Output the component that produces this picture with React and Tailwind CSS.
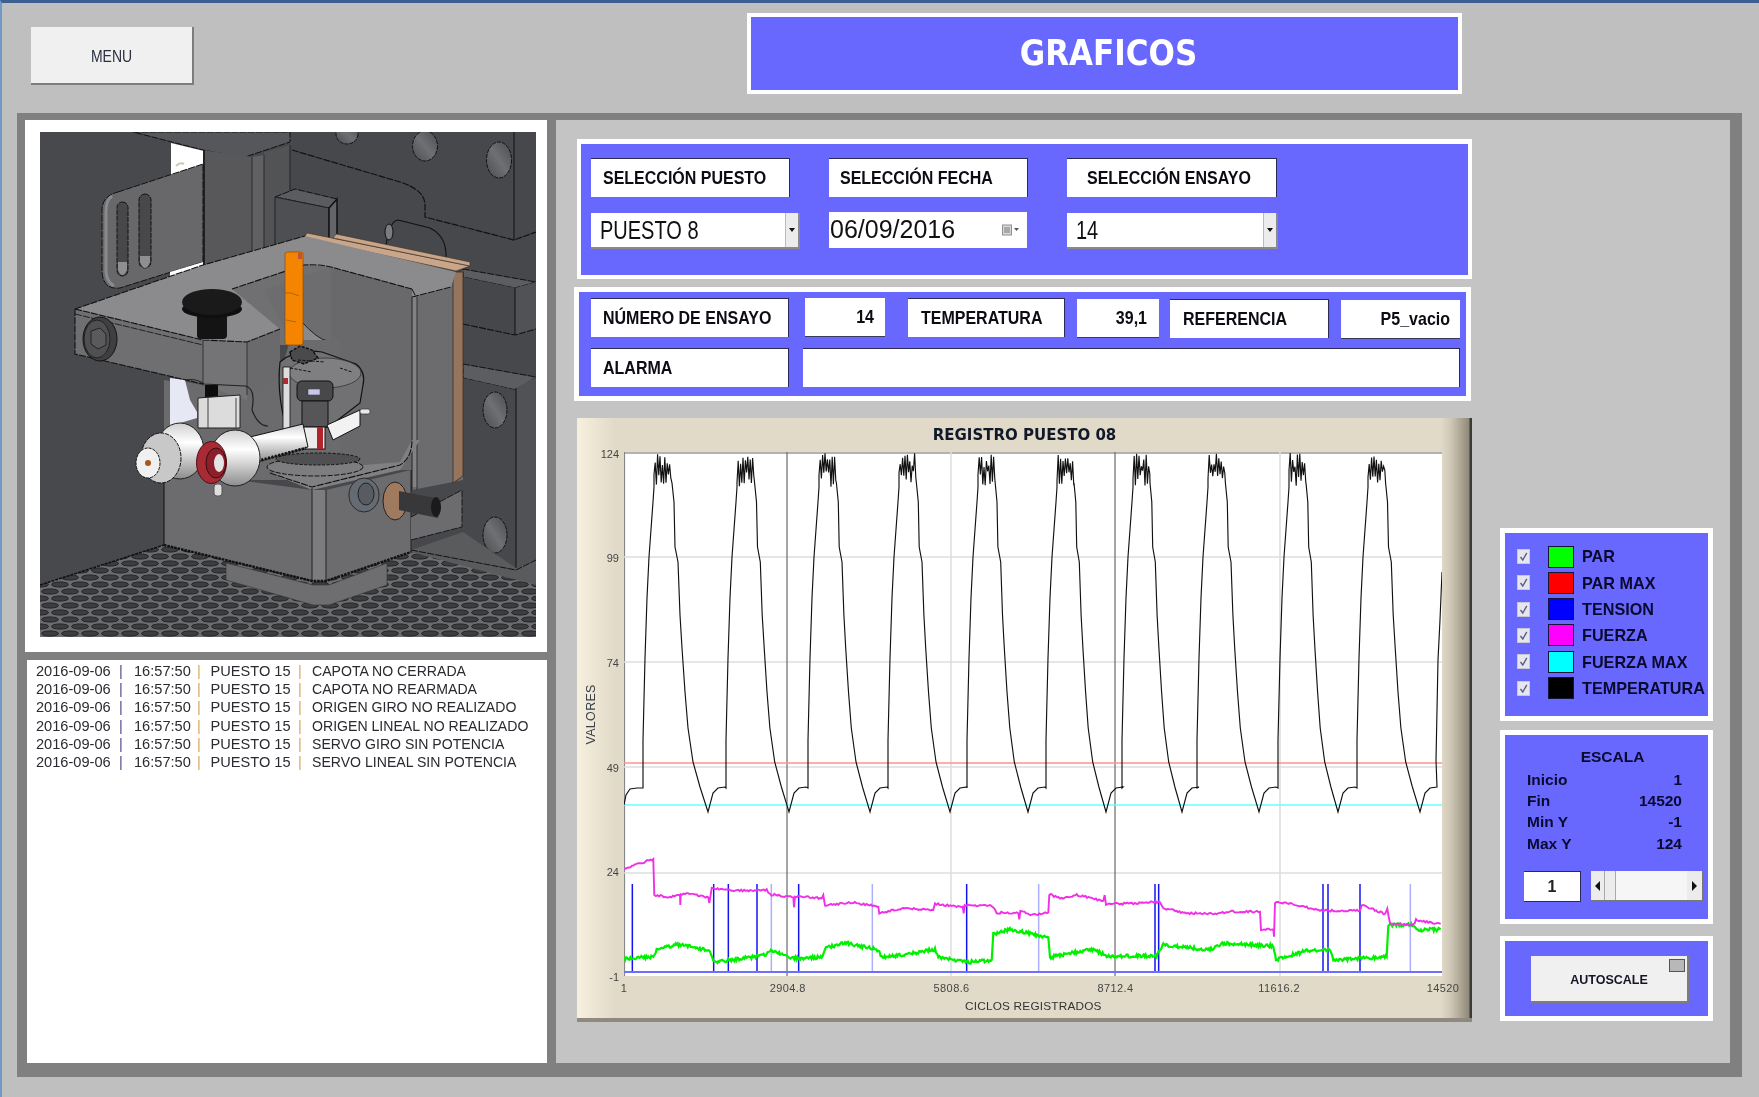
import React from "react";

const z5 = ([x, y]) => [570 + x / 3, 760 + y / 3];
const z6 = ([x, y]) => [1060 + x / 3, 760 + y / 3];

function hash(n) {
  const s = Math.sin(n * 127.1 + 11.7) * 43758.5453;
  return s - Math.floor(s);
}

function noisy(points, amp, step, seed) {
  let d = "";
  let n = 0;
  for (let i = 0; i < points.length - 1; i++) {
    const [x0, y0] = points[i];
    const [x1, y1] = points[i + 1];
    const len = Math.max(1, Math.round(Math.abs(x1 - x0) / step));
    for (let k = 0; k < len; k++) {
      const t = k / len;
      const jitter = (hash(n + seed) - 0.5) * 2 * amp;
      const x = x0 + (x1 - x0) * t;
      const y = y0 + (y1 - y0) * t + (Math.abs(x1 - x0) < 2 ? 0 : jitter);
      d += (n === 0 ? "M" : "L") + x.toFixed(1) + " " + y.toFixed(1);
      n++;
    }
  }
  const last = points[points.length - 1];
  return d + "L" + last[0] + " " + last[1];
}

const pink = [
  ...[[163, 325], [250, 297], [253, 405], [300, 412], [330, 405], [331, 435], [332, 405], [345, 400], [415, 412], [418, 428], [425, 385], [500, 392], [590, 390], [600, 403], [670, 412], [672, 442], [675, 408], [755, 415], [760, 405], [765, 435], [850, 428], [925, 440], [928, 460], [1000, 445], [1090, 450], [1095, 432], [1178, 440], [1181, 460], [1184, 435], [1265, 438], [1280, 458], [1345, 460], [1348, 478], [1351, 450], [1385, 465], [1435, 458], [1438, 403]].map(z5),
  ...[[0, 415], [50, 405], [130, 422], [134, 405], [138, 432], [220, 430], [300, 425], [310, 445], [380, 460], [470, 460], [510, 455], [600, 455], [603, 508], [640, 508], [642, 530], [645, 428], [700, 432], [780, 452], [900, 452], [905, 435], [975, 462], [982, 445], [990, 490], [1060, 495], [1068, 480], [1142, 492]].map(z6),
];

const green = [
  ...[[163, 595], [250, 590], [260, 570], [320, 553], [420, 572], [430, 600], [445, 605], [520, 595], [590, 585], [600, 570], [670, 595], [755, 592], [765, 565], [825, 548], [925, 570], [935, 593], [1000, 585], [1095, 568], [1105, 590], [1190, 607], [1265, 600], [1270, 522], [1320, 508], [1435, 532], [1440, 593]].map(z5),
  ...[[0, 585], [100, 568], [140, 588], [290, 588], [310, 555], [450, 570], [490, 550], [640, 558], [648, 600], [740, 572], [810, 570], [820, 600], [980, 590], [985, 495], [1060, 495], [1068, 510], [1142, 508]].map(z6),
];

const blueDark = [187, 431, 475, 561, 686, 1190].map((x) => 570 + x / 3).concat([285, 296, 789, 804, 900].map((x) => 1060 + x / 3));
const blueLight = [604, 907, 1406].map((x) => 570 + x / 3).concat([1060 + 1051 / 3]);

function temperature() {
  const peaks = [663, 746, 828, 908, 987, 1066, 1142, 1217, 1298, 1377];
  const troughs = [708, 789, 870, 950, 1028, 1106, 1182, 1259, 1338, 1420];
  const rise = [[-20, 788], [-20, 740], [-18, 658], [-16, 598], [-14, 557], [-10, 502], [-9, 487]];
  const fall = [[9, 483], [11, 502], [12, 547], [15, 562], [17, 615], [19, 648], [22, 692], [25, 728], [30, 762], [37, 787], [45, 812]];
  let d = "M624 805L626 795L630 789L637 788";
  peaks.forEach((p, i) => {
    const t = troughs[i];
    rise.forEach(([o, y]) => (d += `L${p + o} ${y}`));
    for (let x = p - 9, n = 0; x <= p + 9; x += 1.2, n++) {
      const up = 453 + hash(n + i * 31) * 14;
      const dn = 470 + hash(n + i * 17 + 5) * 17;
      d += `L${x.toFixed(1)} ${n % 2 ? up.toFixed(1) : dn.toFixed(1)}`;
    }
    const k = (t - p) / 45;
    fall.forEach(([o, y]) => (d += `L${(p + o * k).toFixed(1)} ${y}`));
    d += `L${t + 5} 793L${t + 10} 788L${t + 17} 787`;
  });
  d += "L1436 760L1438 660L1440 620L1442 572";
  return d;
}

const LOG = [
  "CAPOTA NO CERRADA",
  "CAPOTA NO REARMADA",
  "ORIGEN GIRO NO REALIZADO",
  "ORIGEN LINEAL NO REALIZADO",
  "SERVO GIRO SIN POTENCIA",
  "SERVO LINEAL SIN POTENCIA",
];

const LEGEND = [
  ["PAR", "bg-[#00ff00]"],
  ["PAR MAX", "bg-[#ff0000]"],
  ["TENSION", "bg-[#0000ff]"],
  ["FUERZA", "bg-[#ff00ff]"],
  ["FUERZA MAX", "bg-[#00ffff]"],
  ["TEMPERATURA", "bg-[#000000]"],
];

function MachinePicture() {
  const dash = "7 1.2";
  return (
    <svg viewBox="40 132 496 505" className="block w-[496px] h-[505px]">
      <defs>
        <pattern id="mesh" x="0" y="0" width="20" height="14" patternUnits="userSpaceOnUse">
          <rect width="20" height="14" fill="#6c6d70" />
          <ellipse cx="10" cy="3.5" rx="8.5" ry="2.6" fill="#3c3d40" stroke="#141414" strokeWidth="0.8" />
          <ellipse cx="0" cy="10.5" rx="8.5" ry="2.6" fill="#3c3d40" stroke="#141414" strokeWidth="0.8" />
          <ellipse cx="20" cy="10.5" rx="8.5" ry="2.6" fill="#3c3d40" stroke="#141414" strokeWidth="0.8" />
        </pattern>
        <linearGradient id="hole" x1="0" y1="1" x2="1" y2="0">
          <stop offset="0" stopColor="#4a4c50" />
          <stop offset="0.5" stopColor="#6e7074" />
          <stop offset="1" stopColor="#4a4c50" />
        </linearGradient>
        <linearGradient id="cyl" x1="0" y1="0" x2="0" y2="1">
          <stop offset="0" stopColor="#d0d0d0" />
          <stop offset="0.35" stopColor="#ffffff" />
          <stop offset="1" stopColor="#8c8c8c" />
        </linearGradient>
      </defs>
      <rect x="40" y="132" width="496" height="505" fill="#47494c" />

      {/* back plate */}
      <polygon points="203,132 536,132 536,600 203,600" fill="#46484b" />
      <polygon points="133,132 290,132 290,142 245,157 235,156 203,150" fill="#56575a" stroke="#111" strokeWidth="1" strokeDasharray={dash} />
      <polygon points="171,143 204,151 204,164 171,176" fill="#ffffff" />
      <polygon points="203,150 252,157 252,300 203,300" fill="#58585a" />
      <polygon points="252,157 264,155 264,300 252,300" fill="#606062" />
      <polygon points="264,152 290,145 290,260 264,270" fill="#525355" />
      <line x1="204" y1="150" x2="204" y2="265" stroke="#111" strokeWidth="1.5" />
      <line x1="252" y1="157" x2="252" y2="285" stroke="#2a2a2a" />
      <line x1="264" y1="155" x2="264" y2="280" stroke="#2a2a2a" />
      <line x1="290" y1="145" x2="290" y2="200" stroke="#222" />
      <path d="M292 150L400 182Q425 190 425 205L425 217L514 240L536 232" fill="none" stroke="#111" strokeWidth="1.2" strokeDasharray={dash} />
      <line x1="514" y1="132" x2="514" y2="240" stroke="#111" />
      <ellipse cx="347" cy="134" rx="11" ry="10" fill="url(#hole)" stroke="#111" strokeDasharray="4 1" />
      <ellipse cx="425" cy="146" rx="12.5" ry="15" fill="url(#hole)" stroke="#111" strokeDasharray="4 1" />
      <ellipse cx="499" cy="160" rx="12.5" ry="18" fill="url(#hole)" stroke="#111" strokeDasharray="4 1" />
      <path d="M385 255Q388 221 398 220L430 228Q446 236 446 255L446 265L385 255Z" fill="#46484b" stroke="#111" strokeWidth="1.1" />
      <ellipse cx="389" cy="232" rx="4" ry="8" fill="#7a7c80" stroke="#111" />

      {/* step block */}
      <polygon points="275,197 295,189 337,199 329,208" fill="#5a5c5f" stroke="#111" strokeDasharray={dash} />
      <polygon points="275,197 329,208 329,250 275,250" fill="#4d4f52" stroke="#222" />
      <polygon points="329,208 337,199 337,245 329,250" fill="#63656a" stroke="#111" strokeWidth="1.5" />

      {/* slotted plate */}
      <path d="M118 192L203 164L203 262L120 288Q103 290 102 272L102 210Q102 196 118 192Z" fill="#68686a" stroke="#111" strokeDasharray={dash} />
      <path d="M112 196Q106 200 106 212L106 272Q107 282 114 286" fill="none" stroke="#8a8a8c" strokeWidth="3" />
      <rect x="117" y="202" width="11" height="74" rx="5.5" fill="#48484a" stroke="#111" strokeDasharray="5 1" />
      <path d="M118 262L127 262L127 270Q122 280 118 270Z" fill="#8f8f91" />
      <rect x="139" y="194" width="12" height="74" rx="6" fill="#48484a" stroke="#111" strokeDasharray="5 1" />
      <path d="M140 256L150 256L150 262Q145 274 140 262Z" fill="#8f8f91" />
      <path d="M176 166Q180 162 184 164" fill="none" stroke="#c8c8b0" strokeWidth="2" />
      <polygon points="170,272 203,262 203,267 170,277" fill="#ffffff" />

      {/* bracket inner walls */}
      <polygon points="232,289 304,265 331,267 331,345 270,345" fill="#707072" />
      <polygon points="331,267 412,289 412,470 331,470" fill="#69696b" />
      <polygon points="264,290 331,267 331,345 290,340" fill="#6d6d6f" />
      <path d="M300 320Q318 340 328 341L300 342Z" fill="#8a8a8c" stroke="#222" />
      <polygon points="412,289 451,282 463,270 463,480 412,490" fill="#6c6c6e" />
      <rect x="412" y="297" width="5" height="190" fill="#828284" />
      <line x1="412" y1="297" x2="412" y2="490" stroke="#222" />
      <line x1="417" y1="297" x2="417" y2="490" stroke="#333" />

      {/* right plates */}
      <polygon points="463,269 536,282 515,288 463,277" fill="#5b5d60" stroke="#111" strokeDasharray={dash} />
      <polygon points="463,277 515,288 515,335 463,324" fill="#45474a" />
      <polygon points="515,288 536,282 536,329 515,335" fill="#505255" />
      <line x1="515" y1="288" x2="515" y2="335" stroke="#111" />
      <path d="M463 324L515 335L536 329" fill="none" stroke="#111" strokeWidth="1.1" strokeDasharray={dash} />
      <polygon points="463,364 536,377 516,390 463,378" fill="#5b5d60" stroke="#111" strokeDasharray={dash} />
      <polygon points="463,378 516,390 516,568 411,550 463,530" fill="#46484b" />
      <polygon points="516,388 536,377 536,560 516,568" fill="#505255" />
      <line x1="516" y1="388" x2="516" y2="568" stroke="#111" />
      <ellipse cx="495" cy="410" rx="12" ry="18" fill="url(#hole)" stroke="#111" strokeDasharray="4 1" />
      <ellipse cx="495" cy="535" rx="12" ry="18" fill="url(#hole)" stroke="#111" strokeDasharray="4 1" />
      <polygon points="411,550 463,532 516,568 536,560 536,590 411,560" fill="#5a5b5d" />
      <path d="M411 550L516 570L536 560" fill="none" stroke="#111" strokeDasharray={dash} />

      {/* brown strip */}
      <polygon points="453,272 463,272 463,476 453,483" fill="#96755e" stroke="#3a2f27" strokeWidth="0.8" />
      <polygon points="307,233 470,266 456,271 304,238" fill="#c9a689" stroke="#3a2f27" strokeWidth="0.6" />
      <polygon points="336,234 470,262 470,266 333,238" fill="#c9a689" stroke="#3a2f27" strokeWidth="0.6" />

      {/* lower wall behind regulator */}
      <polygon points="170,378 247,395 280,375 290,340 340,340 340,480 164,480" fill="#6b6b6d" />
      <polygon points="40,350 120,363 164,380 164,545 40,585" fill="#47494c" />
      <polygon points="164,380 247,395 247,480 164,480" fill="#6b6b6d" />
      <polygon points="170,378 185,380 190,400 197,412 197,418 170,426" fill="#e6e8f4" />

      {/* bracket faces */}
      <polygon points="75,309 203,265 305,236 456,272 451,287 412,297 412,289 331,267 304,265 232,289 280,329 247,342 203,340" fill="#8b8b8d" />
      <path d="M75 309L203 265L305 236" fill="none" stroke="#111" strokeWidth="1.1" strokeDasharray={dash} />
      <path d="M412 289L331 267Q318 264 304 265L232 289" fill="none" stroke="#111" strokeWidth="1.1" strokeDasharray={dash} />
      <path d="M412 297L451 287M412 289L416 297" fill="none" stroke="#111" strokeDasharray={dash} />
      <polygon points="75,309 203,340 203,384 75,354" fill="#6f6f71" />
      <path d="M75 314L203 345" stroke="#222" fill="none" strokeDasharray={dash} />
      <polygon points="203,340 247,342 247,400 203,385" fill="#747476" />
      <polygon points="247,342 280,329 280,375 247,400" fill="#6a6a6c" />
      <path d="M75 309L203 340L247 342L280 329" fill="none" stroke="#111" strokeWidth="1.1" strokeDasharray={dash} />
      <path d="M75 309L75 354L203 384" fill="none" stroke="#111" strokeWidth="1.1" strokeDasharray={dash} />
      <line x1="203" y1="340" x2="203" y2="385" stroke="#333" />
      <line x1="247" y1="342" x2="247" y2="395" stroke="#333" />
      <path d="M186 380Q196 378 204 384L245 386Q256 388 252 410Q258 426 268 426" fill="none" stroke="#222" strokeWidth="1.2" />

      {/* arm bolt */}
      <ellipse cx="100" cy="339" rx="17" ry="22" fill="#3f3f41" stroke="#111" />
      <ellipse cx="97" cy="339" rx="13" ry="19" fill="#505052" stroke="#222" />
      <polygon points="91,331 100,328 106,334 106,345 98,349 91,344" fill="#5a5a5c" stroke="#222" />

      {/* knob */}
      <rect x="197" y="312" width="30" height="27" rx="4" fill="#141414" />
      <ellipse cx="212" cy="309" rx="30" ry="9" fill="#0f0f0f" />
      <ellipse cx="212" cy="302" rx="30" ry="13" fill="#1a1a1a" />

      {/* floor */}
      <polygon points="40,585 164,545 312,580 411,552 536,585 536,637 40,637" fill="url(#mesh)" />
      <path d="M40 585L164 545" fill="none" stroke="#111" strokeWidth="1.6" strokeDasharray="3 1" />

      {/* base */}
      <polygon points="226,563 313,585 329,585 387,563 387,585 329,605 313,605 226,580" fill="#6e6e70" stroke="#333" strokeWidth="0.6" />
      <polygon points="164,470 312,490 312,580 164,545" fill="#6c6c6e" />
      <polygon points="312,490 326,490 326,580 312,580" fill="#7c7c7e" />
      <polygon points="326,490 411,470 411,552 326,580" fill="#6c6c6e" />
      <polygon points="270,473 400,462 412,440 420,440 400,470 312,490" fill="#808082" />
      <path d="M270 473L312 487L400 465Q412 458 412 440" fill="none" stroke="#111" strokeWidth="1.1" strokeDasharray={dash} />
      <line x1="164" y1="470" x2="164" y2="545" stroke="#111" />
      <line x1="312" y1="488" x2="312" y2="582" stroke="#222" />
      <line x1="326" y1="490" x2="326" y2="582" stroke="#222" />
      <line x1="411" y1="470" x2="411" y2="552" stroke="#222" />
      <path d="M164 545L312 581L326 581L411 552" fill="none" stroke="#111" strokeWidth="2.4" strokeDasharray="2.5 1" />
      <polygon points="411,517 462,490 462,527 411,540" fill="#6c6c6e" />
      <path d="M411 517L462 490M411 540L462 527L462 490" fill="none" stroke="#111" strokeWidth="0.9" strokeDasharray={dash} />

      {/* washer and thread */}
      <ellipse cx="364" cy="495" rx="15" ry="17" fill="#656b72" stroke="#2a2a2a" />
      <ellipse cx="366" cy="494" rx="8" ry="11" fill="#585c62" stroke="#222" />
      <ellipse cx="395" cy="501" rx="12" ry="19" fill="#a07a5f" stroke="#222" />
      <polygon points="399,491 435,498 441,506 438,518 399,510" fill="#38383a" />
      <ellipse cx="436" cy="507" rx="5" ry="10" fill="#1a1a1a" />

      {/* regulator upper */}
      <path d="M280 362Q296 348 322 352L356 364Q366 372 363 385L360 403L330 426L290 438Q276 400 280 362Z" fill="#717173" stroke="#111" strokeWidth="1.2" />
      <ellipse cx="325" cy="373" rx="36" ry="15" fill="#7f7f81" stroke="#333" strokeWidth="0.8" />
      <path d="M290 352L300 346L312 350L318 358L304 364L292 360Z" fill="#4a4a4c" stroke="#0c0c0c" strokeWidth="1.4" strokeDasharray="3 1.5" />
      <path d="M298 360L325 362M290 368L312 372M340 368L352 372" stroke="#111" strokeWidth="1" strokeDasharray="3 1.5" fill="none" />
      <rect x="283" y="367" width="7" height="75" fill="#ddd" stroke="#111" strokeWidth="0.8" />
      <rect x="283" y="378" width="5" height="6" fill="#b02a30" />
      <rect x="297" y="381" width="36" height="20" rx="5" fill="#48484a" stroke="#111" />
      <rect x="308" y="389" width="12" height="6" fill="#c9c6ee" stroke="#444" strokeWidth="0.6" />
      <rect x="302" y="401" width="26" height="26" fill="#565658" stroke="#111" />
      <polygon points="327,425 360,410 360,426 333,440" fill="#f2f2f2" stroke="#111" />
      <rect x="360" y="409" width="10" height="5" rx="2" fill="#e8e8e8" stroke="#333" strokeWidth="0.7" />
      <rect x="303" y="427" width="22" height="22" fill="#ececec" stroke="#111" />
      <rect x="317" y="427" width="6" height="22" fill="#b3232b" />
      <ellipse cx="315" cy="467" rx="48" ry="9" fill="#7d7d7f" stroke="#111" strokeDasharray="5 1.5" />
      <ellipse cx="318" cy="459" rx="42" ry="6" fill="#505052" stroke="#111" strokeDasharray="3 1.5" />

      {/* upper white block */}
      <rect x="205" y="385" width="13" height="12" fill="#0c0c0c" />
      <polygon points="198,398 240,395 240,428 198,428" fill="#dcdcdc" stroke="#222" />
      <line x1="208" y1="398" x2="208" y2="428" stroke="#444" />
      <line x1="236" y1="398" x2="236" y2="428" stroke="#444" />

      {/* body cylinder */}
      <polygon points="250,437 303,424 308,447 257,462" fill="url(#cyl)" stroke="#111" />
      <path d="M258 461L306 448" stroke="#111" strokeWidth="3" strokeDasharray="2 1.5" fill="none" />
      <ellipse cx="235" cy="458" rx="25" ry="28" fill="url(#cyl)" stroke="#222" />
      <rect x="214" y="484" width="8" height="12" rx="3" fill="#dedede" stroke="#555" />
      <ellipse cx="180" cy="451" rx="24" ry="28" fill="url(#cyl)" stroke="#222" />
      <ellipse cx="161" cy="458" rx="20" ry="25" fill="#c8c8c8" stroke="#111" strokeDasharray="4 1" />
      <ellipse cx="148" cy="463" rx="12" ry="15" fill="#f0f0f0" stroke="#111" strokeDasharray="3 1" />
      <circle cx="148" cy="463" r="3" fill="#a8561c" />
      <ellipse cx="211.5" cy="462.5" rx="15" ry="21" fill="#a72a35" stroke="#4a0f14" />
      <ellipse cx="216" cy="463" rx="10" ry="15" fill="#8c1f2a" stroke="#3a0c10" />
      <ellipse cx="219" cy="463" rx="5" ry="9" fill="#e4e4e4" />

      {/* orange handle */}
      <rect x="285" y="252" width="18" height="93" rx="2.5" fill="#f58400" stroke="#8a4a00" strokeWidth="0.7" />
      <path d="M285 293L291 293L299 296M286 320L296 322" stroke="#a65a00" strokeWidth="0.8" fill="none" />
      <rect x="298" y="253" width="4" height="6" fill="#c05040" />
    </svg>
  );
}

function Chart() {
  const yTicks = ["124", "99", "74", "49", "24", "-1"];
  const xTicks = ["1", "2904.8", "5808.6", "8712.4", "11616.2", "14520"];
  return (
    <div className="mt-[17px] w-[895px] h-[604px] border-b-4 border-[#8f8a7c] bg-[linear-gradient(90deg,#f8f0de_0px,#e2dac8_38px,#e2dac8_864px,#cfc7b5_874px,#8f8979_892px,#3a3a36_893px)] font-['Liberation_Sans',sans-serif]">
      <div className="h-[34px] flex items-center justify-center text-[15px] font-bold text-[#10182a] font-['DejaVu_Sans',sans-serif]">
        <span className="block">REGISTRO PUESTO 08</span>
      </div>
      <div className="flex h-[524px]">
        <div className="w-[28px] flex items-center justify-center">
          <span className="block -rotate-90 whitespace-nowrap text-[12.5px] text-[#3a4048] tracking-[0.3px]">VALORES</span>
        </div>
        <div className="w-[14px] mt-[2px] h-[523px] flex flex-col justify-between items-end">
          {yTicks.map((t) => (
            <div key={t} className="h-0 flex items-center justify-end whitespace-nowrap text-[11px] text-[#454545]">
              {t}
            </div>
          ))}
        </div>
        <div className="w-[5px]" />
        <svg viewBox="624 452 818 524" className="block w-[818px] h-[524px] bg-white">
          <line x1="624" y1="453" x2="1442" y2="453" stroke="#999" strokeWidth="1.5" />
          <line x1="624.5" y1="452" x2="624.5" y2="976" stroke="#888" strokeWidth="1.2" />
          {[557, 662, 767, 873].map((y) => (
            <line key={y} x1="624" y1={y} x2="1442" y2={y} stroke="#dedede" strokeWidth="1.6" />
          ))}
          <line x1="951" y1="452" x2="951" y2="976" stroke="#dcdcdc" strokeWidth="1.5" />
          <line x1="1280" y1="452" x2="1280" y2="976" stroke="#dcdcdc" strokeWidth="1.5" />
          <line x1="787" y1="452" x2="787" y2="976" stroke="#6a6a6a" strokeWidth="1.2" />
          <line x1="1115" y1="452" x2="1115" y2="976" stroke="#6a6a6a" strokeWidth="1.2" />
          <line x1="624" y1="763" x2="1442" y2="763" stroke="#ff9090" strokeWidth="1.5" />
          <line x1="624" y1="805" x2="1442" y2="805" stroke="#66ffff" strokeWidth="1.5" />
          {blueLight.map((x) => (
            <line key={x} x1={x} y1="884" x2={x} y2="972" stroke="#aeaeff" strokeWidth="1.5" />
          ))}
          {blueDark.map((x) => (
            <line key={x} x1={x} y1="884" x2={x} y2="972" stroke="#1414f0" strokeWidth="1.5" />
          ))}
          <line x1="624" y1="972" x2="1442" y2="972" stroke="#6f6fff" strokeWidth="2" />
          <path d={noisy(green, 1.7, 1, 3)} fill="none" stroke="#00f000" strokeWidth="2.2" />
          <path d={noisy(pink, 1, 1.5, 91)} fill="none" stroke="#f030e8" strokeWidth="1.9" />
          <path d={temperature()} fill="none" stroke="#111" strokeWidth="1.15" />
        </svg>
      </div>
      <div className="ml-[47px] w-[819px] mt-[5px] h-[14px] flex justify-between items-center">
        {xTicks.map((t) => (
          <div key={t} className="w-0 flex justify-center whitespace-nowrap text-[11px] text-[#454545] tracking-[0.4px]">
            {t}
          </div>
        ))}
      </div>
      <div className="pl-[388px] w-[895px] mt-[3px] whitespace-nowrap text-[11.8px] text-[#333] tracking-[0.2px]">CICLOS REGISTRADOS</div>
    </div>
  );
}

function Label({ w, pl, mt, children }) {
  return (
    <div className={`${w} ${pl} ${mt || ""} h-[39px] shrink-0 bg-white border-t border-r border-[#2a2a55] border-b-[#8a8a9a] flex items-center font-bold text-[#0c0c14] text-[16px] font-['Liberation_Sans',sans-serif] whitespace-nowrap`}>
      <span className="block scale-y-[1.12]">{children}</span>
    </div>
  );
}

function Value({ w, pr, ml, mt, children }) {
  return (
    <div className={`${w} ${pr} ${ml} ${mt || ""} h-[39px] shrink-0 bg-white border-b border-[#3a3a5a] flex items-center justify-end font-bold text-[#0c0c14] text-[16px] font-['Liberation_Sans',sans-serif]`}>
      <span className="block scale-y-[1.12]">{children}</span>
    </div>
  );
}

function Combo({ w, text }) {
  return (
    <div className={`${w} h-[36px] bg-white flex items-stretch border-b-2 border-r-2 border-[#8a8a8a]`}>
      <div className="flex-1 flex items-center pl-[9px] text-[20px] text-[#111] font-['Liberation_Sans',sans-serif]">
        <span className="block scale-y-[1.25]">{text}</span>
      </div>
      <div className="w-[13px] bg-[#ececec] border-l border-[#bbb] flex items-center justify-center">
        <span className="block w-0 h-0 border-l-[3px] border-r-[3px] border-t-[4px] border-l-transparent border-r-transparent border-t-[#111]" />
      </div>
    </div>
  );
}

function Check() {
  return (
    <svg viewBox="0 0 13 15" className="block w-[13px] h-[15px]">
      <rect x="0.5" y="0.5" width="12" height="14" fill="#e6e6ee" stroke="#c8c8d4" />
      <path d="M3.5 8L5.8 11L9.8 3.8" fill="none" stroke="#5d5d80" strokeWidth="1.4" />
    </svg>
  );
}

export default function App() {
  return (
    <div className="w-[1759px] h-[1097px] overflow-hidden bg-[#bfbfbf] border-t-[3px] border-t-[#3d5f8f] border-l-2 border-l-[#6f9ac8] blur-[0.35px] font-['Liberation_Sans',sans-serif]">
      <header className="h-[110px] flex items-start">
        <div className="ml-[29px] mt-[24px] w-[163px] h-[58px] bg-[#f0f0f0] border-r-2 border-b-2 border-[#7d7d7d] flex items-center justify-center pt-[2px] text-[14px] text-[#2a3040]">
          <span className="block scale-y-[1.15]">MENU</span>
        </div>
        <div className="ml-[553px] mt-[10px] w-[715px] h-[81px] bg-[#6868ff] border-[4px] border-white flex items-center justify-center pl-[8px] pb-[2px] text-white font-bold text-[31px] font-['DejaVu_Sans',sans-serif]">
          <span className="block scale-y-[1.15]">GRAFICOS</span>
        </div>
      </header>

      <main className="ml-[15px] w-[1725px] h-[964px] bg-[#808080] pt-[7px] pl-[8px] pr-[12px] pb-[14px] flex gap-[9px]">
        <div className="w-[522px] flex flex-col gap-[8px]">
          <div className="h-[532px] bg-white pl-[15px] pt-[12px]">
            <MachinePicture />
          </div>
          <div className="h-[403px] ml-[2px] bg-white pt-[2px] pl-[9px] text-[14.6px] leading-[18.2px] text-[#2a2a30]">
            {LOG.map((m) => (
              <div key={m} className="grid grid-cols-[83px_15px_63px_13.5px_87.5px_14px_1fr] whitespace-nowrap">
                <span>2016-09-06</span>
                <span className="text-[#5a4a90]">|</span>
                <span>16:57:50</span>
                <span className="text-[#d8a860]">|</span>
                <span>PUESTO 15</span>
                <span className="text-[#d8a860]">|</span>
                <span className="text-[14.1px]">{m}</span>
              </div>
            ))}
          </div>
        </div>

        <div className="w-[1174px] bg-[#c4c4c4] pt-[19px] pl-[21px] flex">
          <div className="w-[895px] shrink-0 flex flex-col items-start">
            <section className="w-[895px] h-[140px] border-[4px] border-t-[5px] border-white bg-[#6868ff] pl-[10px] pt-[14px]">
              <div className="flex">
                <Label w="w-[199px]" pl="pl-[12px]">SELECCIÓN PUESTO</Label>
                <div className="w-[39px]" />
                <Label w="w-[199px]" pl="pl-[11px]">SELECCIÓN FECHA</Label>
                <div className="w-[39px]" />
                <Label w="w-[210px]" pl="pl-[20px]">SELECCIÓN ENSAYO</Label>
              </div>
              <div className="flex mt-[16px]">
                <Combo w="w-[209px]" text="PUESTO 8" />
                <div className="w-[29px]" />
                <div className="w-[198px] h-[36px] -mt-[1px] bg-white flex items-center pl-[1px] text-[25px] text-[#111]">
                  <span className="flex-1">06/09/2016</span>
                  <svg viewBox="0 0 18 12" className="block w-[18px] h-[12px] mr-[7px]">
                    <rect x="0.5" y="1" width="9" height="10" fill="#d8d8d8" stroke="#909090" />
                    <rect x="2" y="3" width="6" height="6" fill="#a8a8a8" />
                    <path d="M12 4L17 4L14.5 7Z" fill="#555" />
                  </svg>
                </div>
                <div className="w-[40px]" />
                <Combo w="w-[211px]" text="14" />
              </div>
            </section>

            <section className="mt-[8px] -ml-[3px] w-[897px] h-[114px] border-[5px] border-white bg-[#6868ff] pl-[12px] pt-[6px]">
              <div className="flex items-start">
                <Label w="w-[198px]" pl="pl-[12px]">NÚMERO DE ENSAYO</Label>
                <Value w="w-[80px]" pr="pr-[11px]" ml="ml-[16px]">14</Value>
                <Label w="w-[157px] ml-[23px]" pl="pl-[13px]">TEMPERATURA</Label>
                <Value w="w-[82px]" pr="pr-[12px]" ml="ml-[12px]" mt="mt-[1px]">39,1</Value>
                <Label w="w-[159px] ml-[11px]" pl="pl-[13px]" mt="mt-[1px]">REFERENCIA</Label>
                <Value w="w-[119px]" pr="pr-[10px]" ml="ml-[12px]" mt="mt-[2px]">P5_vacio</Value>
              </div>
              <div className="flex mt-[9px]">
                <Label w="w-[198px]" pl="pl-[12px]">ALARMA</Label>
                <div className="ml-[14px] w-[657px] h-[39px] bg-white border-t border-r border-[#2a2a55] border-b-[#8a8a9a]" />
              </div>
            </section>

            <Chart />
          </div>

          <div className="ml-[28px] mt-[389px] w-[213px] flex flex-col">
            <section className="h-[193px] border-[5px] border-white bg-[#6868ff] pl-[12px] pt-[12.6px] flex flex-col gap-[4.3px]">
              {LEGEND.map(([name, color]) => (
                <div key={name} className="flex items-center h-[22px]">
                  <Check />
                  <div className={`ml-[18px] w-[26px] h-[22px] border border-[#15153a] ${color}`} />
                  <span className="ml-[8px] whitespace-nowrap font-bold text-[16.2px] text-[#0a0a30]">{name}</span>
                </div>
              ))}
            </section>

            <section className="mt-[9px] h-[194px] border-[5px] border-white bg-[#6868ff] pt-[10.4px]">
              <div className="text-center font-bold text-[15.5px] text-[#0a0a30] pl-[12px]">ESCALA</div>
              <div className="pl-[22px] w-[177px] text-[15.5px] leading-[21.4px] font-bold text-[#0a0a30]">
                {[["Inicio", "1"], ["Fin", "14520"], ["Min Y", "-1"], ["Max Y", "124"]].map(([k, v]) => (
                  <div key={k} className="flex justify-between">
                    <span>{k}</span>
                    <span>{v}</span>
                  </div>
                ))}
              </div>
              <div className="mt-[17px] ml-[19px] flex items-start">
                <div className="w-[57px] h-[31px] bg-white border-t border-r border-b border-[#2a2a55] flex items-center justify-center font-bold text-[16px] text-[#222]">1</div>
                <div className="ml-[10px] w-[111px] h-[29px] flex bg-[#f4f4f4] shadow-[1px_1px_0_#777]">
                  <div className="w-[14px] bg-[#ececec] border-r border-[#aaa] flex items-center justify-center">
                    <span className="block w-0 h-0 border-t-[5px] border-b-[5px] border-r-[5px] border-t-transparent border-b-transparent border-r-[#111]" />
                  </div>
                  <div className="w-[11px] bg-[#ececec] border-r border-[#aaa]" />
                  <div className="flex-1 bg-[#f6f6f6]" />
                  <div className="w-[15px] bg-[#ececec] flex items-center justify-center">
                    <span className="block w-0 h-0 border-t-[5px] border-b-[5px] border-l-[5px] border-t-transparent border-b-transparent border-l-[#111]" />
                  </div>
                </div>
              </div>
            </section>

            <section className="mt-[12px] h-[85px] w-[213px] border-[5px] border-white bg-[#6868ff] pl-[26px] pt-[15px]">
              <div className="relative w-[158px] h-[47px] bg-[#f0f0f0] border-b-2 border-r-2 border-[#7d7d7d] flex items-center justify-center pt-[3px] font-bold text-[12.5px] text-[#141428]">
                AUTOSCALE
                <div className="absolute right-[2px] top-[3px] w-[16px] h-[13px] bg-[#b8b8b8] border border-[#555]" />
              </div>
            </section>
          </div>
        </div>
      </main>
    </div>
  );
}
